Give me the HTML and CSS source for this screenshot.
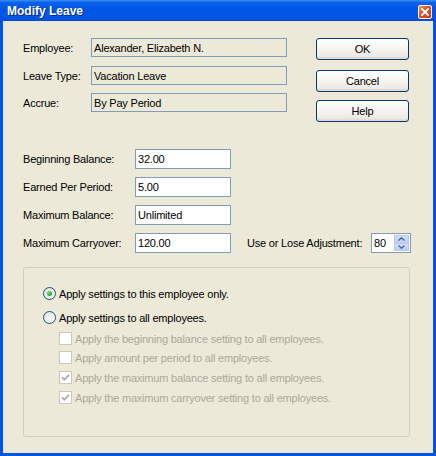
FILE: index.html
```html
<!DOCTYPE html>
<html>
<head>
<meta charset="utf-8">
<title>Modify Leave</title>
<link rel="stylesheet" href="styles.css">
</head>
<body>
<div class="window">
  <div class="titlebar">
    <span class="title">Modify Leave</span>
    <span class="close">
      <svg width="8" height="8" viewBox="0 0 8 8"><path d="M1 1 L7 7 M7 1 L1 7" stroke="#fff" stroke-width="1.8" stroke-linecap="square"/></svg>
    </span>
  </div>
  <div class="client">
    <div class="top">
      <div class="info">
        <div class="row"><span class="lbl lbl-info">Employee:</span><span class="field ro wide">Alexander, Elizabeth N.</span></div>
        <div class="row r2"><span class="lbl lbl-info">Leave Type:</span><span class="field ro wide">Vacation Leave</span></div>
        <div class="row r3"><span class="lbl lbl-info">Accrue:</span><span class="field ro wide">By Pay Period</span></div>
      </div>
      <div class="buttons">
        <button class="btn">OK</button>
        <button class="btn b2">Cancel</button>
        <button class="btn b3">Help</button>
      </div>
    </div>
    <div class="balances">
      <div class="brow"><span class="lbl lbl-bal">Beginning Balance:</span><span class="field edit">32.00</span></div>
      <div class="brow"><span class="lbl lbl-bal">Earned Per Period:</span><span class="field edit">5.00</span></div>
      <div class="brow"><span class="lbl lbl-bal">Maximum Balance:</span><span class="field edit">Unlimited</span></div>
      <div class="brow"><span class="lbl lbl-bal">Maximum Carryover:</span><span class="field edit">120.00</span>
        <span class="lbl lbl-use">Use or Lose Adjustment:</span>
        <span class="spin"><span class="spin-val">80</span>
          <span class="spin-btns">
            <span class="sb"><svg width="7" height="4" viewBox="0 0 7 4"><path d="M0.5 3.5 L3.5 0.8 L6.5 3.5" fill="none" stroke="#4D6185" stroke-width="1.3"/></svg></span>
            <span class="sb"><svg width="7" height="4" viewBox="0 0 7 4"><path d="M0.5 0.5 L3.5 3.2 L6.5 0.5" fill="none" stroke="#4D6185" stroke-width="1.3"/></svg></span>
          </span>
        </span>
      </div>
    </div>
    <div class="group">
      <div class="opt"><span class="radio checked"></span><span class="otext">Apply settings to this employee only.</span></div>
      <div class="opt o2"><span class="radio"></span><span class="otext">Apply settings to all employees.</span></div>
      <div class="opt chk c1"><span class="cbox"></span><span class="otext dis">Apply the beginning balance setting to all employees.</span></div>
      <div class="opt chk c2"><span class="cbox"></span><span class="otext dis">Apply amount per period to all employees.</span></div>
      <div class="opt chk c3"><span class="cbox"><svg width="9" height="9" viewBox="0 0 9 9"><path d="M1 4.2 L3.3 6.6 L8 1.8" fill="none" stroke="#B2AE9E" stroke-width="1.8"/></svg></span><span class="otext dis">Apply the maximum balance setting to all employees.</span></div>
      <div class="opt chk c4"><span class="cbox"><svg width="9" height="9" viewBox="0 0 9 9"><path d="M1 4.2 L3.3 6.6 L8 1.8" fill="none" stroke="#B2AE9E" stroke-width="1.8"/></svg></span><span class="otext dis">Apply the maximum carryover setting to all employees.</span></div>
    </div>
  </div>
</div>
</body>
</html>
```

FILE: styles.css
```css
* { box-sizing: border-box; }
html, body { margin: 0; padding: 0; }
body {
  width: 436px;
  height: 456px;
  overflow: hidden;
  font-family: "Liberation Sans", Arial, sans-serif;
  font-size: 11px;
  letter-spacing: -0.2px;
  color: #000;
  background: #ECE9D8;
}
.window {
  width: 436px;
  height: 456px;
  display: flex;
  flex-direction: column;
  background: #0055E5;
}
.titlebar {
  height: 21px;
  flex: none;
  display: flex;
  align-items: center;
  padding-left: 7px;
  padding-right: 4px;
  background: linear-gradient(to bottom, #3D8FF5 0%, #0A62EC 12%, #0055E5 45%, #0057E8 80%, #0048D6 100%);
}
.title {
  flex: 1;
  color: #fff;
  font-weight: bold;
  font-size: 12px;
  letter-spacing: 0;
  text-shadow: 1px 1px 0 #0A2A8A;
}
.close {
  width: 14px;
  height: 14px;
  margin-top: 2px;
  border: 1px solid #fff;
  border-radius: 2px;
  background: linear-gradient(135deg, #E9937A 0%, #E0552F 40%, #CC3A12 100%);
  display: flex;
  align-items: center;
  justify-content: center;
}
.client {
  flex: 1;
  margin: 0 3px 3px 3px;
  background: #ECE9D8;
  padding: 17px 0 0 20px;
}
.top {
  display: flex;
  align-items: flex-start;
}
.row, .brow {
  display: flex;
  align-items: center;
}
.r2 { margin-top: 9px; }
.r3 { margin-top: 8px; }
.lbl { flex: none; }
.lbl-info { width: 68px; }
.lbl-bal { width: 112px; }
.lbl-use { width: 124px; margin-left: 16px; }
.field {
  display: flex;
  align-items: center;
  border: 1px solid #7F9DB9;
  padding: 0 0 0 2px;
  flex: none;
}
.ro {
  background: #ECE9D8;
  height: 19px;
}
.wide { width: 196px; }
.edit {
  background: #fff;
  width: 96px;
  height: 20px;
}
.buttons {
  margin-left: 29px;
  display: flex;
  flex-direction: column;
}
.btn {
  width: 93px;
  height: 22px;
  border: 1px solid #003C74;
  border-radius: 3px;
  background: linear-gradient(to bottom, #FFFFFF 0%, #F5F4F0 50%, #EBEAE4 85%, #D8D3C8 100%);
  font-family: inherit;
  font-size: 11px;
  letter-spacing: -0.2px;
  color: #000;
  padding: 0;
  margin: 0;
}
.b2 { margin-top: 10px; }
.b3 { margin-top: 8px; }
.balances {
  margin-top: 27px;
  display: flex;
  flex-direction: column;
  gap: 8px;
}
.spin {
  width: 40px;
  height: 20px;
  border: 1px solid #7F9DB9;
  background: #fff;
  display: flex;
  align-items: center;
  padding: 1px 1px 1px 2px;
}
.spin-val { flex: 1; }
.spin-btns {
  width: 15px;
  height: 16px;
  display: flex;
  flex-direction: column;
  margin-right: 0;
}
.sb {
  flex: 1;
  display: flex;
  align-items: center;
  justify-content: center;
  background: linear-gradient(to bottom, #D3E0FB, #BACCF6);
  border: 1px solid #B7C8F0;
}
.sb + .sb { border-top: none; }
.group {
  margin-top: 14px;
  width: 387px;
  height: 170px;
  border: 1px solid #D0D0BF;
  border-radius: 3px;
  padding: 19px 0 0 19px;
}
.opt {
  display: flex;
  align-items: center;
  height: 13px;
}
.o2 { margin-top: 11px; }
.chk { margin-left: 16px; }
.c1 { margin-top: 8px; }
.c2 { margin-top: 6px; }
.c3 { margin-top: 7px; }
.c4 { margin-top: 7px; }
.radio {
  width: 13px;
  height: 13px;
  flex: none;
  border-radius: 50%;
  border: 1px solid #1C5180;
  background: linear-gradient(135deg, #DCDCD5 0%, #F2F2EE 50%, #FFFFFF 100%);
  display: flex;
  align-items: center;
  justify-content: center;
}
.radio.checked::after {
  content: "";
  width: 5px;
  height: 5px;
  border-radius: 50%;
  background: radial-gradient(circle at 35% 35%, #6FE06A 0%, #2DB02A 60%, #1E8E1D 100%);
}
.otext { margin-left: 3px; white-space: nowrap; }
.cbox {
  width: 13px;
  height: 13px;
  flex: none;
  border: 1px solid #CAC8BB;
  background: #fff;
  display: flex;
  align-items: center;
  justify-content: center;
}
.dis { color: #ACA899; }
```
